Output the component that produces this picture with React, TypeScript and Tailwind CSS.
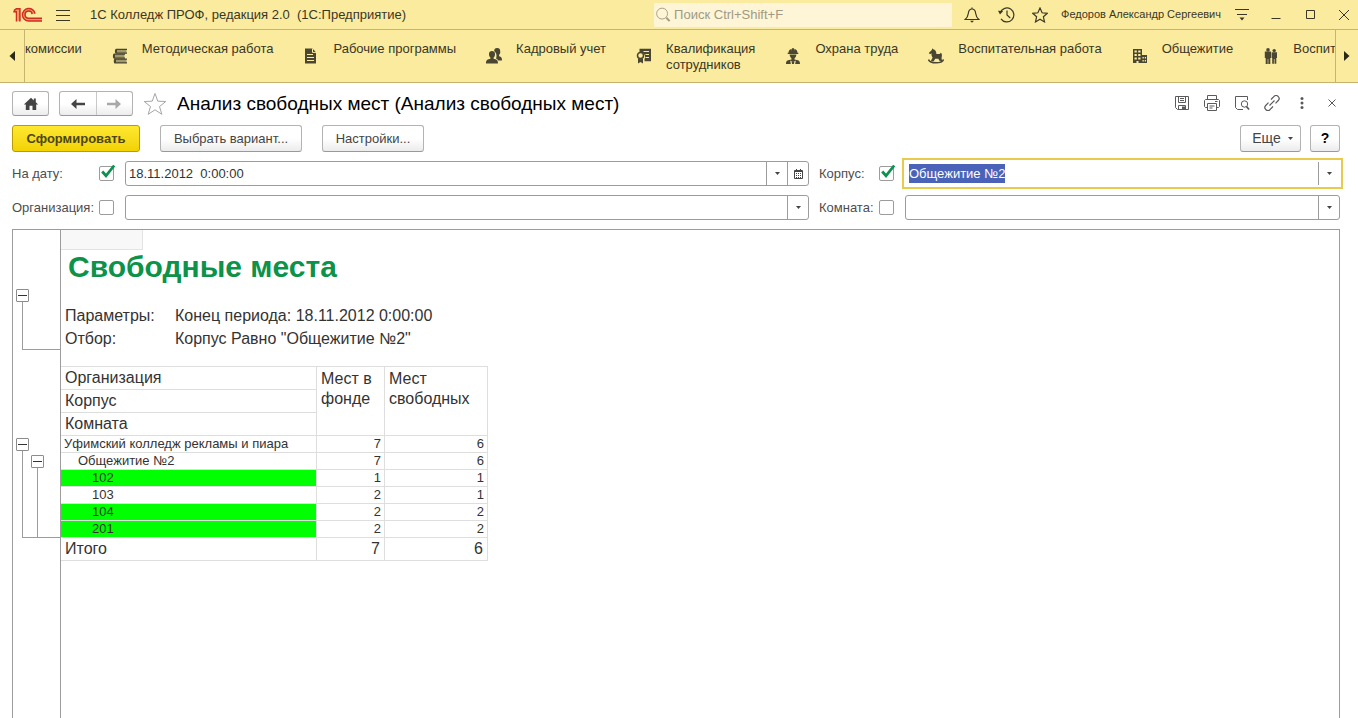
import { useEffect, useRef } from 'react';
import type { ReactNode } from 'react';

const iconColor = '#4a4632';

function Logo() {
  return (
    <svg width="30" height="16" viewBox="0 0 30 16" fill="none" aria-label="1С">
      <path d="M1 4.400L4.500 2.200H6V14M21.400 6.800A5 5 0 1 0 15.600 12.800H29" stroke="#ec9a5c" strokeWidth="2.600" />
      <g stroke="#cf2c22" strokeWidth="1.500">
        <path d="M0.300 4.700h3.200V14.400" />
        <path d="M1 3.600L3.400 1.700H6.900V14.400" />
        <path d="M22 6.600A6.300 6.300 0 1 0 15.600 14.100H29" />
        <path d="M19.200 7.200A3.600 3.600 0 1 0 15.600 11.300H29" />
      </g>
    </svg>
  );
}

function BooksIcon() {
  return (
    <svg width="16" height="16" viewBox="0 0 16 16" fill={iconColor}>
      <path d="M4 1.200h10.500v4H4z" opacity=".5" />
      <path d="M2 6h10.500v4H2z" opacity=".5" />
      <path d="M4 11h10.500v4H4z" opacity=".5" />
      <path d="M4.200 0.800H15v1.200H5v2.400h10v1.400H4.200C2.500 5.800 2.500 0.800 4.200 0.800z" />
      <path d="M2.200 5.600H13v1.200H3v2.600h10v1.400H2.200C.5 10.800.5 5.600 2.200 5.600z" />
      <path d="M3.200 10.400H15v1.400H4v2.400h11v1.400H3.200C1.300 15.600 1.300 10.400 3.200 10.400z" />
    </svg>
  );
}

function DocIcon() {
  return (
    <svg width="16" height="16" viewBox="0 0 16 16">
      <path fill={iconColor} d="M2 0.600h7.500L13 4.200V15.400H2z" />
      <path stroke="#faeb9e" strokeWidth="1" d="M9.500 0.600v3.800H13M4 6.500h6M4 9.500h7M4 12.500h7" fill="none" />
    </svg>
  );
}

function PeopleIcon() {
  return (
    <svg width="16" height="16" viewBox="0 0 16 16" fill={iconColor}>
      <path d="M8.200 3.200a3 3 0 0 1 6 -.2c.4 1.800-.4 3.300-1.200 4l.2 1.200c2 .5 2.800 1.200 2.800 4.200h-3.800c-.4-.9-1.200-1.500-2.200-1.900.8-1.500 1.100-5.400-1.800-7.300z" />
      <path d="M3 6a3 3 0 0 1 6 0c.1 1.600-.6 3-1.400 3.600v1.200c2.800.6 4.400 1.200 4.400 4.600H0c0-3.400 1.600-4 4.400-4.600V9.600C3.600 9 2.900 7.600 3 6z" />
    </svg>
  );
}

function CertificateIcon() {
  return (
    <svg width="16" height="16" viewBox="0 0 16 16">
      <path fill={iconColor} d="M3.500 0.800H15v12.400H8.500V11a4.400 4.400 0 0 0-3.700-6.600l-1.300.1z" />
      <circle cx="4.500" cy="7.500" r="3" fill="none" stroke={iconColor} strokeWidth="1.500" />
      <path fill={iconColor} d="M2 10.200l2.500 1 2.500-1V15.500l-2.500-1.600L2 15.500z" />
      <path stroke="#faeb9e" d="M7.500 3.500h5.500M9.500 6.500H13M9.500 9.500H13" />
    </svg>
  );
}

function WorkerIcon() {
  return (
    <svg width="16" height="16" viewBox="0 0 16 16">
      <path fill={iconColor} d="M3.500 4.800a4.500 4.300 0 0 1 3-4L7 3V.2h2V3l.5-2.200A4.500 4.300 0 0 1 12.500 4.800h.8v1.200H2.700V4.800zM4.600 6.600h6.800C11.300 8.500 10.200 10 9.500 10.400v1.200c3.500.4 5.500 1 5.500 4.400H1c0-3.400 2-4 5.500-4.400v-1.200C5.800 10 4.700 8.500 4.600 6.600z" />
      <path fill="#faeb9e" d="M5.200 12.600l2.800 1.300 2.800-1.300-.6 3.400H5.800z" />
      <path fill={iconColor} d="M6.500 13.400h3l-.6 2.600h-1.800z" />
    </svg>
  );
}

function HorseIcon() {
  return (
    <svg width="16" height="16" viewBox="0 0 16 16" fill={iconColor}>
      <path d="M4.400 0.200l.8 1.100c2 .4 3.100 1.900 3.200 4.700h2.200c1.300 0 1.800-.4 2.100-1.200 1.100.5 1.500 2 1.100 3.600-.4 1.300-.2 2.700.5 4.600h-2.600l-1.400-2.200H7.200l-1.500 2.400H2.800L4.600 9.500c-1-1.200-1.300-2.800-1-4.200L2 6.200 0.800 4.900l3-3z" />
      <path fill="none" stroke={iconColor} strokeWidth="1.600" d="M0.500 11.500c1.200 4.400 14 4.400 15-.2" />
    </svg>
  );
}

function BuildingIcon() {
  return (
    <svg width="16" height="16" viewBox="0 0 16 16">
      <path fill={iconColor} d="M1 1h9v6h5v8H1z" />
      <path fill="#faeb9e" d="M2.500 2.500h2.300v2h-2.300zM6.200 2.500h2.300v2H6.200zM2.500 6h2.300v2h-2.300zM6.200 6h2.300v2H6.200zM2.500 9.500h2.300v2h-2.300zM6.200 9.500h2.300v2H6.200zM4.500 13h2v2h-2zM10.500 9h1.300v1.500h-1.300zM12.800 9h1.200v1.500h-1.200zM10.500 12h1.300v1.500h-1.300zM12.800 12h1.200v1.500h-1.200z" />
    </svg>
  );
}

function PairIcon() {
  return (
    <svg width="16" height="16" viewBox="0 0 16 16" fill={iconColor}>
      <circle cx="5" cy="1.900" r="1.800" />
      <circle cx="11.200" cy="2.600" r="1.700" />
      <path d="M1.800 3.600h6.200V10H7.300v6H5.300v-5h-.6v5H2.700v-6h-.9zM8.600 4.300H14V10h-.7v5.700h-1.800V11h-.6v4.700H9.200V10h-.6z" />
    </svg>
  );
}

const sections: { label: ReactNode; icon: ReactNode }[] = [
  { label: 'Методическая работа', icon: <BooksIcon /> },
  { label: 'Рабочие программы', icon: <DocIcon /> },
  { label: 'Кадровый учет', icon: <PeopleIcon /> },
  { label: <>Квалификация<br />сотрудников</>, icon: <CertificateIcon /> },
  { label: 'Охрана труда', icon: <WorkerIcon /> },
  { label: 'Воспитательная работа', icon: <HorseIcon /> },
  { label: 'Общежитие', icon: <BuildingIcon /> },
  { label: 'Воспита', icon: <PairIcon /> },
];

function TitleBar() {
  const btn = 'flex h-6 items-center justify-center';
  return (
    <header className="flex h-[30px] items-center border-b border-[#c4b671] pl-[13px] pr-1 text-[#3b3726]">
      <Logo />
      <button aria-label="Меню" className="ml-[13px] flex h-6 w-4 items-center">
        <svg width="14" height="12" viewBox="0 0 14 12" stroke="#3b3726"><path d="M0 1.500h14M0 6.500h14M0 11.500h14" /></svg>
      </button>
      <h1 className="ml-[18px] flex-1 truncate whitespace-pre text-[13px]">1С Колледж ПРОФ, редакция 2.0  (1С:Предприятие)</h1>
      <label className="flex h-6 w-[298px] items-center bg-[#fdf5d6] pl-[2px]">
        <svg width="16" height="16" viewBox="0 0 16 16" fill="none" stroke="#a39c82"><circle cx="6.500" cy="6.500" r="5.800" /><path d="M11 11l3.500 3.500" strokeWidth="2.200" /></svg>
        <input aria-label="Поиск" placeholder="Поиск Ctrl+Shift+F" className="ml-[3px] w-full bg-transparent text-[13px] outline-none placeholder:text-[#a09a84]" />
      </label>
      <button aria-label="Уведомления" className={`${btn} ml-2 w-6`}>
        <svg width="16" height="16" viewBox="0 0 16 16" fill="none" stroke="#3b3726" strokeWidth="1.200"><path d="M8 0.500v1.500M1.200 12.500h13.600C12.500 10.500 12 9 11.700 6.500 11.400 3.500 10 2 8 2S4.600 3.500 4.300 6.500C4 9 3.500 10.500 1.200 12.500z" /><path d="M6 13.800h4L8 15.800z" fill="#3b3726" stroke="none" /></svg>
      </button>
      <button aria-label="История" className={`${btn} ml-[10px] w-6`}>
        <svg width="17" height="16" viewBox="0 0 17 16" fill="none" stroke="#3b3726" strokeWidth="1.200"><path d="M2.300 5.500A7 7 0 1 1 3 11.800M9 3.500V8l3.200 3" /><path d="M0 3.800l5.200.2L2 7.400z" fill="#3b3726" stroke="none" /></svg>
      </button>
      <button aria-label="Избранное" className={`${btn} ml-[10px] w-6`}>
        <svg width="16" height="16" viewBox="0 0 16 16" fill="none" stroke="#3b3726" strokeWidth="1.200"><path d="M8 1l2.100 4.800 5.200.5-3.900 3.500 1.100 5.100L8 12.200l-4.500 2.700 1.100-5.100L.7 6.300l5.200-.5z" /></svg>
      </button>
      <a href="#user" className="ml-[9px] whitespace-nowrap text-[11px]">Федоров Александр Сергеевич</a>
      <button aria-label="Сервис" className={`${btn} ml-[9px] w-6`}>
        <svg width="14" height="13" viewBox="0 0 14 13" stroke="#3b3726"><path d="M0 1.500h14M2 6.500h10" /><path d="M4.500 9.500h5L7 12.500z" fill="#3b3726" stroke="none" /></svg>
      </button>
      <button aria-label="Свернуть" className={`${btn} ml-[10px] w-6`}>
        <svg width="10" height="10" viewBox="0 0 10 10" stroke="#3b3726"><path d="M0.500 8.500h9" /></svg>
      </button>
      <button aria-label="Развернуть" className={`${btn} ml-[11px] w-6`}>
        <svg width="10" height="10" viewBox="0 0 10 10" stroke="#3b3726" fill="none"><path d="M0.500 0.500h8v8h-8z" /></svg>
      </button>
      <button aria-label="Закрыть" className={`${btn} ml-[11px] w-5`}>
        <svg width="10" height="10" viewBox="0 0 10 10" stroke="#3b3726"><path d="M0 0l10 10M10 0L0 10" /></svg>
      </button>
    </header>
  );
}

function SectionBar() {
  return (
    <nav className="flex h-[53px] border-b border-[#c4b671] text-[13px] leading-4 text-[#3b3726]">
      <button aria-label="Назад по разделам" className="flex w-[25px] shrink-0 items-center justify-center border-r border-[#c4b671]">
        <svg width="6" height="10" viewBox="0 0 6 10"><path d="M6 0v10L0.500 5z" fill="#2b2819" /></svg>
      </button>
      <div className="flex min-w-0 flex-1 gap-[30px] overflow-hidden pt-[11px]">
        <a href="#commission" className="shrink-0">комиссии</a>
        {sections.map((s, i) => (
          <a key={i} href={`#section-${i}`} className="flex shrink-0 items-start gap-[14px] whitespace-nowrap">
            <span className="pt-[7px]">{s.icon}</span>
            <span>{s.label}</span>
          </a>
        ))}
      </div>
      <button aria-label="Вперед по разделам" className="flex w-[23px] shrink-0 items-center justify-center border-l border-[#c4b671]">
        <svg width="6" height="10" viewBox="0 0 6 10"><path d="M0 0v10L5.500 5z" fill="#2b2819" /></svg>
      </button>
    </nav>
  );
}

function Caret() {
  return <svg width="5" height="3" viewBox="0 0 5 3"><path d="M0 0h5L2.500 3z" fill="#444" /></svg>;
}

const plain = 'flex items-center justify-center rounded-[3px] border border-[#b3b3b3] border-b-[#999] bg-linear-to-b from-white from-50% to-[#ececec] text-[#444]';

function PageHeader() {
  return (
    <div className="flex items-center pt-2">
      <button aria-label="Начальная страница" className={`${plain} h-[25px] w-[37px]`}>
        <svg width="16" height="14" viewBox="0 0 16 14" fill="#444"><path d="M8 0.800l2.800 2.600V1.600h2v3.700L15.200 7.600H13.200V13H9.500V8.800h-3V13H2.800V7.600H.8z" /></svg>
      </button>
      <div className={`${plain} ml-[10px] h-[25px] w-[74px]`}>
        <button aria-label="Назад" className="flex h-full flex-1 items-center justify-center border-r border-[#c8c8c8]">
          <svg width="14" height="10" viewBox="0 0 14 10"><path d="M0 5L5.500 0v3.800H14v2.400H5.500V10z" fill="#444" /></svg>
        </button>
        <button aria-label="Вперед" className="flex h-full flex-1 items-center justify-center">
          <svg width="14" height="10" viewBox="0 0 14 10"><path d="M14 5L8.500 0v3.800H0v2.400h8.500V10z" fill="#a8a8a8" /></svg>
        </button>
      </div>
      <button aria-label="В избранное" className="ml-[10px]">
        <svg width="24" height="24" viewBox="0 0 24 24" fill="none" stroke="#a6a6a6"><path d="M12 1.500l2.800 7.700 8 .3-6.300 5 2.300 7.800L12 17.800l-6.800 4.500 2.300-7.800-6.300-5 8-.3z" /></svg>
      </button>
      <h2 className="ml-[10px] flex-1 truncate text-[19px] leading-6 text-black">Анализ свободных мест (Анализ свободных мест)</h2>
      <div className="flex items-center gap-[14px] pb-[2px] text-[#5a5a5a]">
        <button aria-label="Сохранить">
          <svg width="16" height="16" viewBox="0 0 16 16" fill="none" stroke="currentColor"><path d="M1.500 1.500h13v13h-11l-2-2z M4.500 1.500v6h7v-6 M6 3.500h4M6 5.500h4M4.500 14.500v-4h7v4" /><path d="M8 11.500h3v2.500H8z" fill="currentColor" stroke="none" /></svg>
        </button>
        <button aria-label="Печать">
          <svg width="16" height="16" viewBox="0 0 16 16" fill="none" stroke="currentColor"><path d="M3.500 4.500v-4h9v4M3.500 12.500h-2l-1-1v-6l1-1h13l1 1v6l-1 1h-2M3.500 8.500h9v7h-9zM5.500 11h5M5.500 13h3M11 6.500h2.500" /></svg>
        </button>
        <button aria-label="Предварительный просмотр">
          <svg width="16" height="16" viewBox="0 0 16 16" fill="none" stroke="currentColor"><path d="M9 14.500H3.500l-2-2V1.500h12V5" /><circle cx="10.500" cy="9" r="3.200" /><path d="M12.500 11.500l2.500 3" strokeWidth="1.800" /></svg>
        </button>
        <button aria-label="Получить ссылку">
          <svg width="16" height="16" viewBox="0 0 16 16" fill="none" stroke="currentColor" strokeWidth="1.200"><path d="M5.500 10.500l5-5M7 4.500l2.800-2.800a2.700 2.700 0 0 1 4.500 0 2.700 2.700 0 0 1 0 3.800L11.500 8.300M9 11.500l-2.800 2.800a2.700 2.700 0 0 1-4.500 0 2.700 2.700 0 0 1 0-3.800L4.500 7.700" /></svg>
        </button>
        <button aria-label="Другие действия" className="flex w-4 justify-center">
          <svg width="4" height="12" viewBox="0 0 4 12" fill="currentColor"><circle cx="2" cy="1.500" r="1.500" /><circle cx="2" cy="6" r="1.500" /><circle cx="2" cy="10.500" r="1.500" /></svg>
        </button>
        <button aria-label="Закрыть форму" className="flex w-4 justify-center">
          <svg width="8" height="8" viewBox="0 0 8 8" stroke="currentColor"><path d="M0.500 0.500l7 7M7.500 0.500l-7 7" /></svg>
        </button>
      </div>
    </div>
  );
}

function CommandBar() {
  return (
    <div className="mt-[9px] flex items-center text-[13px]">
      <button className="h-[27px] w-32 rounded-[3px] border border-[#b89c00] bg-linear-to-b from-[#ffe82e] to-[#f2d200] font-bold text-[#4d4514]">Сформировать</button>
      <button className={`${plain} ml-5 h-[27px] w-[142px]`}>Выбрать вариант...</button>
      <button className={`${plain} ml-5 h-[27px] w-[102px]`}>Настройки...</button>
      <button className={`${plain} ml-auto h-[27px] w-[61px] gap-[7px] pl-1 text-[14px]`}>Еще<Caret /></button>
      <button aria-label="Справка" className={`${plain} ml-[9px] h-[27px] w-[30px] text-[14px] font-bold`}><span className="text-black">?</span></button>
    </div>
  );
}

function Check({ id, label, checked = false }: { id: string; label: string; checked?: boolean }) {
  return (
    <span className="relative flex h-[15px] w-[15px]">
      <input id={id} type="checkbox" aria-label={label} defaultChecked={checked} className="peer h-[15px] w-[15px] appearance-none rounded-[2px] border border-[#9c9c9c] bg-white" />
      <svg className="pointer-events-none absolute -top-[2px] left-[2px] hidden peer-checked:block" width="15" height="15" viewBox="0 0 15 15" fill="none" stroke="#0e9150" strokeWidth="2.800"><path d="M1.200 7.500L5 11.800 13.200 1.500" /></svg>
    </span>
  );
}

function Field({ id, value = '', calendar = false, active = false }: { id: string; value?: string; calendar?: boolean; active?: boolean }) {
  const ref = useRef<HTMLInputElement>(null);
  useEffect(() => {
    if (active && ref.current) {
      ref.current.focus();
      ref.current.select();
    }
  }, [active]);
  const frame = active
    ? 'border-white outline-2 outline-offset-1 outline-[#e8cb4c]'
    : 'rounded-[3px] border-[#9c9c9c]';
  return (
    <div className={`flex h-[25px] min-w-0 border bg-white ${frame}`}>
      <input ref={ref} id={id} defaultValue={value} className="min-w-0 flex-1 bg-transparent px-[3px] text-[13px] text-[#333] outline-none selection:bg-[#4a63b8] selection:text-white" />
      <button type="button" aria-label="Выбрать из списка" className="flex w-[21px] items-center justify-center border-l border-[#9c9c9c]"><Caret /></button>
      {calendar && (
        <button type="button" aria-label="Календарь" className="flex w-[21px] items-center justify-center border-l border-[#9c9c9c]">
          <svg width="9" height="10" viewBox="0 0 9 10" fill="none" stroke="#444"><path d="M0.500 1.500h8v8h-8z M0.500 2.500h8 M2.500 0v2M6.500 0v2" /><path d="M2 4.500h6M2 6.500h6M2 8.500h6" strokeDasharray="1 1" /></svg>
        </button>
      )}
    </div>
  );
}

function Filters() {
  return (
    <form className="mt-[9px] grid grid-cols-[87px_26px_minmax(0,684fr)_70px_26px_minmax(0,435fr)] items-center gap-y-[9px] text-[13px] text-[#4d4d4d]">
      <label htmlFor="date">На дату:</label>
      <Check id="useDate" label="Использовать дату" checked />
      <Field id="date" value="18.11.2012  0:00:00" calendar />
      <label htmlFor="building" className="pl-[10px]">Корпус:</label>
      <Check id="useBuilding" label="Использовать корпус" checked />
      <Field id="building" value="Общежитие №2" active />
      <label htmlFor="org">Организация:</label>
      <Check id="useOrg" label="Использовать организацию" />
      <Field id="org" />
      <label htmlFor="room" className="pl-[10px]">Комната:</label>
      <Check id="useRoom" label="Использовать комнату" />
      <Field id="room" />
    </form>
  );
}

function Toggle() {
  return (
    <button aria-label="Свернуть группу" className="flex h-[13px] w-[13px] shrink-0 items-center justify-center rounded-[1px] border border-[#8c8c8c] bg-white">
      <span className="h-px w-[9px] bg-[#333]" />
    </button>
  );
}

const rows = [
  { name: 'Уфимский колледж рекламы и пиара', pad: 'pl-[3px]', total: 7, free: 6, bg: '' },
  { name: 'Общежитие №2', pad: 'pl-[17px]', total: 7, free: 6, bg: '' },
  { name: '102', pad: 'pl-[31px]', total: 1, free: 1, bg: 'bg-[#00ff00]' },
  { name: '103', pad: 'pl-[31px]', total: 2, free: 1, bg: '' },
  { name: '104', pad: 'pl-[31px]', total: 2, free: 2, bg: 'bg-[#00ff00]' },
  { name: '201', pad: 'pl-[31px]', total: 2, free: 2, bg: 'bg-[#00ff00]' },
];

function Report() {
  const cell = 'border-b border-r border-[#dedede] p-0 font-normal';
  return (
    <main className="mt-[9px] flex flex-1 border border-b-0 border-[#9c9c9c] text-[#333]">
      <div className="w-12 shrink-0 border-r border-[#9c9c9c] pl-[3px] pt-[59px]">
        <Toggle />
        <div className="ml-[6px] h-[48px] border-b border-l border-[#9c9c9c]" />
        <div className="mt-[88px]">
          <Toggle />
          <div className="ml-[6px] flex h-[87px] border-b border-l border-[#9c9c9c] pl-2 pt-1">
            <div className="flex flex-col">
              <Toggle />
              <div className="ml-[6px] flex-1 border-l border-[#9c9c9c]" />
            </div>
          </div>
        </div>
      </div>
      <div className="min-w-0 flex-1">
        <div className="h-5 w-[82px] border-b border-r border-[#e4e4e4] bg-[#f8f8f8]" />
        <h3 className="pl-[7px] text-[30px] font-bold leading-[34px] text-[#0c9249]">Свободные места</h3>
        <dl className="mt-5 grid grid-cols-[110px_1fr] pl-1 text-[16px] leading-[23px]">
          <dt>Параметры:</dt>
          <dd>Конец периода: 18.11.2012 0:00:00</dd>
          <dt>Отбор:</dt>
          <dd>Корпус Равно "Общежитие №2"</dd>
        </dl>
        <table className="mt-4 w-[427px] table-fixed border-separate border-spacing-0 border-t border-[#dedede] text-left text-[13px] leading-4">
          <colgroup>
            <col className="w-[256px]" />
            <col className="w-[68px]" />
            <col className="w-[103px]" />
          </colgroup>
          <thead className="text-[16px]">
            <tr className="h-[23px] leading-[22px]">
              <th className={`${cell} pl-1`}>Организация</th>
              <th rowSpan={3} className={`${cell} pl-1 pt-[2px] align-top leading-5`}>Мест в фонде</th>
              <th rowSpan={3} className={`${cell} pl-1 pt-[2px] align-top leading-5`}>Мест свободных</th>
            </tr>
            <tr className="h-[23px] leading-[22px]"><th className={`${cell} pl-1`}>Корпус</th></tr>
            <tr className="h-[23px] leading-[22px]"><th className={`${cell} pl-1`}>Комната</th></tr>
          </thead>
          <tbody>
            {rows.map((r) => (
              <tr key={r.name} className="h-[17px]">
                <td className={`${cell} ${r.bg}`}><div className={`${r.pad} whitespace-nowrap`}>{r.name}</div></td>
                <td className={`${cell} text-right`}><div className="pr-[3px]">{r.total}</div></td>
                <td className={`${cell} text-right`}><div className="pr-[3px]">{r.free}</div></td>
              </tr>
            ))}
          </tbody>
          <tfoot className="text-[16px] leading-[22px]">
            <tr className="h-[23px]">
              <td className={`${cell} pl-1`}>Итого</td>
              <td className={`${cell} text-right`}><div className="pr-1">7</div></td>
              <td className={`${cell} text-right`}><div className="pr-1">6</div></td>
            </tr>
          </tfoot>
        </table>
      </div>
    </main>
  );
}

export default function App() {
  return (
    <div className="flex h-screen flex-col overflow-hidden bg-white font-['Liberation_Sans',Arial,sans-serif]">
      <div className="shrink-0 bg-[#faeb9e]">
        <TitleBar />
        <SectionBar />
      </div>
      <div className="flex min-h-0 flex-1 flex-col pl-3 pr-[18px]">
        <PageHeader />
        <CommandBar />
        <Filters />
        <Report />
      </div>
    </div>
  );
}
